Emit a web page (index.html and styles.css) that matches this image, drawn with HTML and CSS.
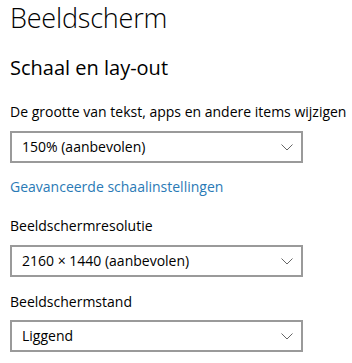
FILE: index.html
```html
<!DOCTYPE html>
<html lang="nl">
<head>
  <meta charset="UTF-8" />
  <meta name="viewport" content="width=device-width, initial-scale=1.0" />
  <title>Beeldscherm</title>
  <link rel="stylesheet" href="styles.css">
</head>
<body>
  <main class="settings">
    <h1 class="page-title">Beeldscherm</h1>
    <h2 class="section-title">Schaal en lay-out</h2>

    <div class="setting">
      <div class="setting-label">De grootte van tekst, apps en andere items wijzigen</div>
      <div class="dropdown dropdown-first">
        <span>150% (aanbevolen)</span>
        <svg class="chevron" width="12" height="7" viewBox="0 0 12 7"><polyline points="0.5,0.5 6,6 11.5,0.5" /></svg>
      </div>
    </div>

    <a class="link" href="#">Geavanceerde schaalinstellingen</a>

    <div class="setting setting-res">
      <div class="setting-label">Beeldschermresolutie</div>
      <div class="dropdown">
        <span>2160 × 1440 (aanbevolen)</span>
        <svg class="chevron" width="12" height="7" viewBox="0 0 12 7"><polyline points="0.5,0.5 6,6 11.5,0.5" /></svg>
      </div>
    </div>

    <div class="setting setting-orient">
      <div class="setting-label">Beeldschermstand</div>
      <div class="dropdown dropdown-last">
        <span>Liggend</span>
        <svg class="chevron" width="12" height="7" viewBox="0 0 12 7"><polyline points="0.5,0.5 6,6 11.5,0.5" /></svg>
      </div>
    </div>
  </main>
</body>
</html>
```

FILE: styles.css
```css
:root {
  --text: #000;
  --link: #2a7ab6;
  --border: #9a9a9a;
  --chevron: #666;
}

body {
  margin: 0;
  background: #fff;
  color: var(--text);
  font-family: "Open Sans", "Noto Sans", sans-serif;
}

.settings {
  padding: 0 10px;
}

.page-title {
  margin: 0;
  font-size: 27px;
  font-weight: 300;
  line-height: 36px;
  letter-spacing: -0.2px;
}

.section-title {
  margin: 18px 0 0;
  font-size: 20px;
  font-weight: 400;
  line-height: 28px;
}

.setting {
  margin-top: 20px;
}

.setting-res {
  margin-top: 19px;
}

.setting-orient {
  margin-top: 15px;
}

.setting-label {
  font-size: 14px;
  line-height: 20px;
  white-space: nowrap;
}

.dropdown {
  box-sizing: border-box;
  width: 293px;
  height: 32px;
  margin-top: 9px;
  padding: 0 8px 0 10px;
  border: 2px solid var(--border);
  display: flex;
  align-items: center;
  justify-content: space-between;
  font-size: 14px;
  line-height: 28px;
}

.dropdown-last {
  margin-top: 8px;
}

.chevron polyline {
  fill: none;
  stroke: var(--chevron);
  stroke-width: 1;
}

.link {
  display: block;
  margin-top: 14px;
  color: var(--link);
  text-decoration: none;
  font-size: 14px;
  line-height: 20px;
}
```
